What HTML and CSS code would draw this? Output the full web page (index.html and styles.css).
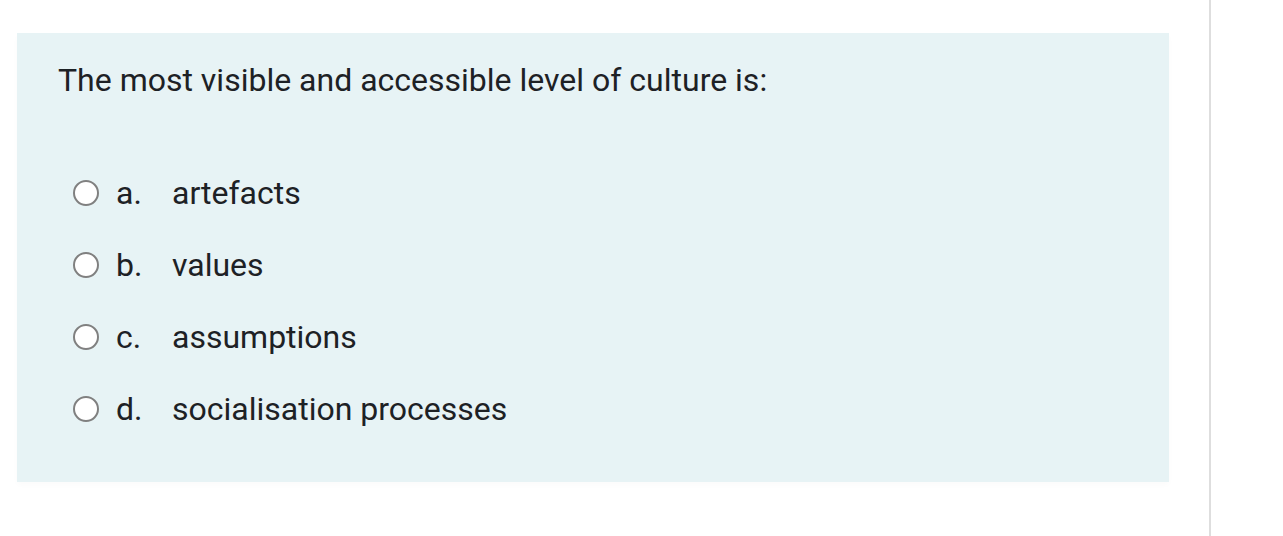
FILE: index.html
```html
<!DOCTYPE html>
<html>
<head>
<meta charset="utf-8">
<link rel="stylesheet" href="styles.css">
</head>
<body>
<div class="page">
  <div class="main">
    <div class="question">
      <div class="qtext">The most visible and accessible level of culture is:</div>
      <div class="answers">
        <div class="opt"><span class="radio"></span><span class="letter">a.</span><span class="label">artefacts</span></div>
        <div class="opt"><span class="radio"></span><span class="letter">b.</span><span class="label">values</span></div>
        <div class="opt"><span class="radio"></span><span class="letter">c.</span><span class="label">assumptions</span></div>
        <div class="opt"><span class="radio"></span><span class="letter">d.</span><span class="label">socialisation processes</span></div>
      </div>
    </div>
  </div>
  <div class="side"></div>
</div>
</body>
</html>
```
FILE: styles.css
```css
html, body {
  margin: 0;
  padding: 0;
  background: #ffffff;
}
body {
  font-family: Roboto, "Liberation Sans", sans-serif;
  color: #1d2125;
}
.page {
  display: flex;
  height: 536px;
  overflow: hidden;
}
.main {
  width: 1209px;
  padding: 33px 0 0 17px;
  box-sizing: border-box;
}
.question {
  width: 1152px;
  height: 449px;
  background: #e7f3f5;
  box-sizing: border-box;
  padding: 60px 0 0 41px;
  box-shadow: 0 3px 6px rgba(0,0,0,0.02);
}
.qtext {
  font-size: 32px;
  line-height: 42px;
  margin-top: -34px;
}
.answers {
  margin-top: 71px;
  display: flex;
  flex-direction: column;
  gap: 30px;
}
.opt {
  display: flex;
  align-items: center;
  height: 42px;
  font-size: 32px;
}
.radio {
  width: 26px;
  height: 26px;
  border: 2px solid #808080;
  border-radius: 50%;
  background: #fff;
  margin-left: 15px;
  box-sizing: border-box;
  flex: none;
}
.letter {
  margin-left: 17px;
  width: 56px;
}
.side {
  width: 2px;
  background: #dedede;
  flex: none;
}
```
